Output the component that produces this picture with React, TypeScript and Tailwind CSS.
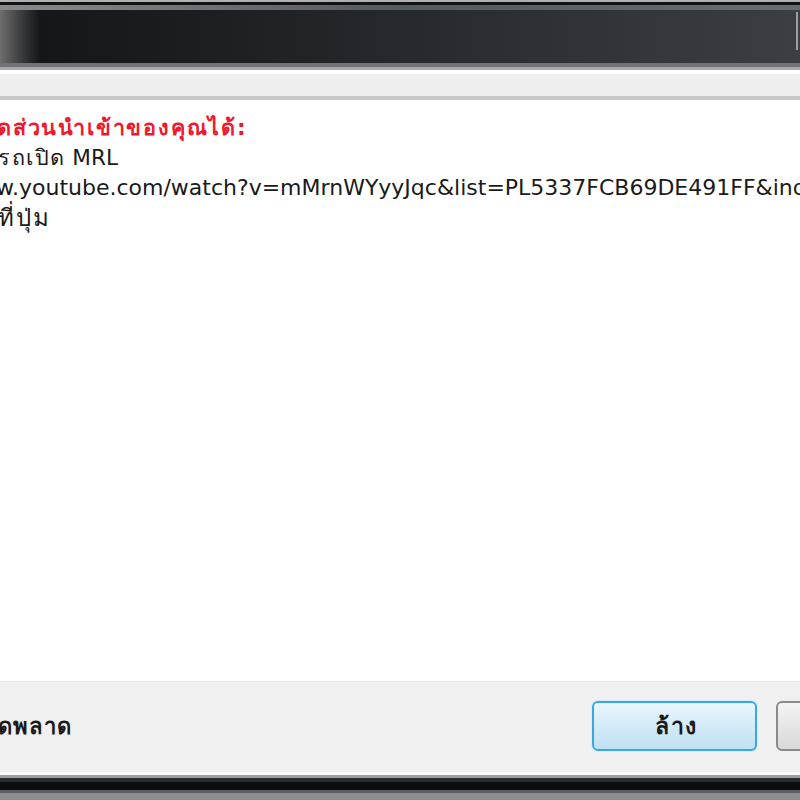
import React from "react";

const font = { fontFamily: '"DejaVu Sans", "Noto Sans", sans-serif' };

function TitleFrame() {
  return (
    <div className="flex flex-col shrink-0">
      <div className="h-[2px] bg-[#b0b0b0]" />
      <div className="h-[3px] bg-[#101214]" />
      <div className="h-[5px] bg-gradient-to-r from-[#8a8a8a] via-[#555a5f] to-[#6a6e72]" />
      <div className="relative h-[53px] bg-gradient-to-r from-[#6e6e6e] via-[#141619] via-[5%] to-[#3b3f44]">
        <div className="absolute right-[2px] top-[2px] h-[38px] w-[2px] bg-[#9a9ea2]" />
      </div>
      <div className="h-[4px] bg-[#707275]" />
      <div className="h-[3px] bg-[#a9a9a9]" />
      <div className="h-[4px] bg-white" />
      <div className="h-[22px] bg-[#eeeeee]" />
      <div className="h-[4px] bg-[#c6c6c6]" />
    </div>
  );
}

function Button({ primary, children }: { primary?: boolean; children?: React.ReactNode }) {
  return (
    <div
      className={
        primary
          ? "w-[165px] h-[50px] shrink-0 rounded-[6px] border-2 border-[#3aa7e4] bg-gradient-to-b from-[#eaf6fd] to-[#bfe0f4] flex items-center justify-center shadow-[0_0_0_1px_#d6eefb]"
          : "w-[60px] h-[50px] shrink-0 rounded-[6px] border-2 border-[#8a8a8a] bg-gradient-to-b from-[#f4f4f4] to-[#d8d8d8] flex items-center justify-center"
      }
    >
      {children}
    </div>
  );
}

export default function App() {
  return (
    <div className="w-[800px] h-[800px] flex flex-col overflow-hidden bg-white" style={font}>
      <TitleFrame />
      <div className="flex-1 bg-white pt-[13px] overflow-hidden text-[21.6px] leading-[30px] text-[#1a1a1a] whitespace-nowrap">
        <div className="-ml-[3px] font-bold text-[#f0182c] tracking-[1.8px]">ดส่วนนำเข้าของคุณได้:</div>
        <div className="-ml-[2px]">
          <span className="tracking-[1.5px]">รถเปิด</span> MRL
        </div>
        <div className="-ml-[4px] text-[22px]">w.youtube.com/watch?v=mMrnWYyyJqc&amp;list=PL5337FCB69DE491FF&amp;index=2</div>
        <div className="-ml-[2px] text-[24px] tracking-[2px]">ที่ปุ่ม</div>
      </div>
      <div className="h-[91px] shrink-0 border-t border-[#e2e7ed] bg-[#f0f0f0] flex items-center pb-[2px]">
        <div className="flex-1 -ml-[2px] text-[22px] tracking-[1.2px] font-bold text-[#1a1a1a]">ดพลาด</div>
        <div className="flex items-center gap-[19px] -mr-[36px]">
          <Button primary>
            <span className="text-[23px] tracking-[1.5px] font-bold text-[#1a1a1a] ml-[4px]">ล้าง</span>
          </Button>
          <Button />
        </div>
      </div>
      <div className="flex flex-col shrink-0">
        <div className="h-[3px] bg-[#fafafa]" />
        <div className="h-[3px] bg-[#9c9c9c]" />
        <div className="h-[4px] bg-[#2a2d30]" />
        <div className="h-[8px] bg-[#0c0d0f]" />
        <div className="h-[3px] bg-[#5b5e62]" />
        <div className="h-[7px] bg-[#8d8d8d]" />
      </div>
    </div>
  );
}
